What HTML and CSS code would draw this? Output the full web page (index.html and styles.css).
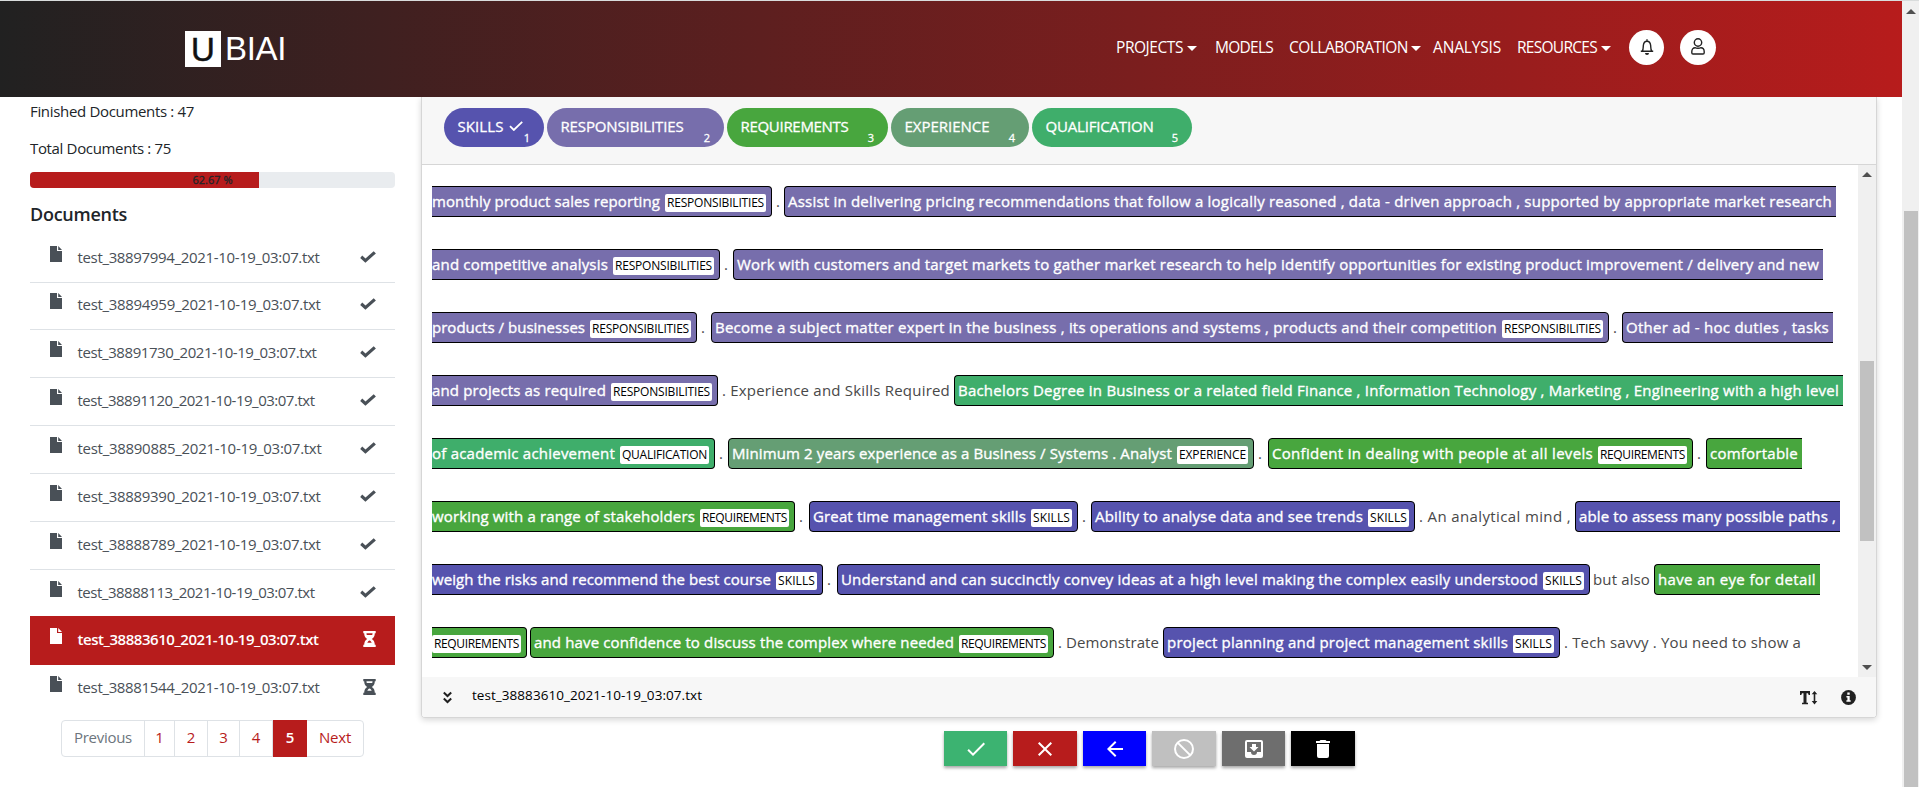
FILE: index.html
```html
<!DOCTYPE html>
<html lang="en">
<head>
<meta charset="utf-8">
<title>UBIAI</title>
<link rel="stylesheet" href="styles.css">
</head>
<body>
<svg class="defs" width="0" height="0">
  <symbol id="file" viewBox="0 0 12 16"><path d="M0 0h7v5h5v11H0zM8.2 0 12 3.9H8.2z"/></symbol>
  <symbol id="check" viewBox="0 0 16 12"><path d="M5.4 11.8.2 6.9l2-2.3 3.3 2.8L13.7.2 15.9 2.4z"/></symbol>
  <symbol id="glass" viewBox="0 0 13 16"><path fill-rule="evenodd" d="M.3 0h12.4v2.2h-.9c0 2.8-1.1 4.600-3 5.800 1.900 1.200 3 3 3 5.800h.9V16H.3v-2.200h.9c0-2.800 1.100-4.600 3-5.800-1.900-1.200-3-3-3-5.800H.3zM3.500 2.200c0 .7.100 1.200.3 1.800h5.400c.2-.6.3-1.100.3-1.800zM4.300 11.800h4.400C8.200 10.300 7.400 9.400 6.500 9.400S4.800 10.300 4.300 11.800z"/></symbol>
</svg>
<div class="window">
  <div class="page">
    <header class="topbar">
      <div class="logo"><span class="logo-u">U</span><span class="logo-rest fit" style="width:61px">BIAI</span></div>
      <nav class="nav">
        <a class="dd"><span class="fit" style="width:67px">PROJECTS</span><i class="caret"></i></a>
        <a class="models"><span class="fit" style="width:58px">MODELS</span></a>
        <a class="dd collab"><span class="fit" style="width:119px">COLLABORATION</span><i class="caret"></i></a>
        <a class="analysis"><span class="fit" style="width:68px">ANALYSIS</span></a>
        <a class="dd"><span class="fit" style="width:80px">RESOURCES</span><i class="caret"></i></a>
        <button class="round bell"><svg width="14" height="16" viewBox="0 0 14 16" fill="none" stroke="#222" stroke-width="1.4"><path d="M.8 12.300h12.400M2.300 12c1-1.500.9-3.200 1-5.200C3.500 4.200 4.800 2.300 7 2.300s3.500 1.900 3.700 4.500c.1 2 0 3.700 1 5.200M7 .2v2"/><path d="M5 14h4a2 2 0 0 1-4 0z" fill="#222" stroke="none"/></svg></button>
        <button class="round user"><svg width="14" height="17" viewBox="0 0 14 17" fill="none" stroke="#222" stroke-width="1.400"><circle cx="7" cy="4.500" r="3.700"/><path d="M4.200 9.700C2 9.700.8 11.500.8 13.700v1.100c0 .8.400 1.200 1.200 1.200h10c.8 0 1.200-.4 1.200-1.200v-1.100c0-2.200-1.200-4-3.400-4-1 .8-4.600.8-5.600 0z"/></svg></button>
      </nav>
    </header>
    <div class="content">
      <aside class="side">
        <p class="stat"><span class="fit" style="width:164px">Finished Documents : 47</span></p>
        <p class="stat"><span class="fit" style="width:141px">Total Documents : 75</span></p>
        <div class="progress"><div class="bar" style="width:62.67%"></div><span class="pct">62.67 %</span></div>
        <h2><span class="fit" style="width:97px">Documents</span></h2>
        <ul class="docs">
          <li><svg class="file"><use href="#file"/></svg><span class="name fit" style="width:242px">test_38897994_2021-10-19_03:07.txt</span><svg class="check"><use href="#check"/></svg></li>
          <li class="short"><svg class="file"><use href="#file"/></svg><span class="name fit" style="width:243px">test_38894959_2021-10-19_03:07.txt</span><svg class="check"><use href="#check"/></svg></li>
          <li><svg class="file"><use href="#file"/></svg><span class="name fit" style="width:239px">test_38891730_2021-10-19_03:07.txt</span><svg class="check"><use href="#check"/></svg></li>
          <li><svg class="file"><use href="#file"/></svg><span class="name fit" style="width:237px">test_38891120_2021-10-19_03:07.txt</span><svg class="check"><use href="#check"/></svg></li>
          <li><svg class="file"><use href="#file"/></svg><span class="name fit" style="width:244px">test_38890885_2021-10-19_03:07.txt</span><svg class="check"><use href="#check"/></svg></li>
          <li><svg class="file"><use href="#file"/></svg><span class="name fit" style="width:243px">test_38889390_2021-10-19_03:07.txt</span><svg class="check"><use href="#check"/></svg></li>
          <li><svg class="file"><use href="#file"/></svg><span class="name fit" style="width:243px">test_38888789_2021-10-19_03:07.txt</span><svg class="check"><use href="#check"/></svg></li>
          <li class="last-done"><svg class="file"><use href="#file"/></svg><span class="name fit" style="width:237px">test_38888113_2021-10-19_03:07.txt</span><svg class="check"><use href="#check"/></svg></li>
          <li class="active"><svg class="file"><use href="#file"/></svg><span class="name fit" style="width:241px">test_38883610_2021-10-19_03:07.txt</span><svg class="glass"><use href="#glass"/></svg></li>
          <li class="end"><svg class="file"><use href="#file"/></svg><span class="name fit" style="width:242px">test_38881544_2021-10-19_03:07.txt</span><svg class="glass"><use href="#glass"/></svg></li>
        </ul>
        <div class="pager"><a class="prev"><span class="fit" style="width:58px">Previous</span></a><a class="p1">1</a><a class="p2">2</a><a class="p3">3</a><a class="p4">4</a><a class="current">5</a><a class="next"><span class="fit" style="width:32px">Next</span></a></div>
      </aside>
      <main class="main">
        <section class="card">
          <div class="labels">
            <div class="pill skills w-skills"><span class="fit" style="width:46px">SKILLS</span><svg width="14" height="10" viewBox="0 0 14 10"><path d="M1 5.200 4.800 9 13.200.8" fill="none" stroke="#fff" stroke-width="1.800"/></svg><b>1</b></div>
            <div class="pill resp w-resp"><span class="fit" style="width:123px">RESPONSIBILITIES</span><b>2</b></div>
            <div class="pill req w-req"><span class="fit" style="width:108px">REQUIREMENTS</span><b>3</b></div>
            <div class="pill exp w-exp"><span class="fit" style="width:85px">EXPERIENCE</span><b>4</b></div>
            <div class="pill qual w-qual"><span class="fit" style="width:108px">QUALIFICATION</span><b>5</b></div>
          </div>
          <div class="body">
            <div class="text">
              <div class="line"><span class="hl resp cont"><span class="t fit" style="width:228px">monthly product sales reporting</span><em class="w101">RESPONSIBILITIES</em></span><span class="gap" style="width:12px">.</span><span class="hl resp open"><span class="t fit" style="width:1044px">Assist in delivering pricing recommendations that follow a logically reasoned , data - driven approach , supported by appropriate market research</span></span></div>
              <div class="line"><span class="hl resp cont"><span class="t fit" style="width:176px">and competitive analysis</span><em class="w101">RESPONSIBILITIES</em></span><span class="gap" style="width:13px">.</span><span class="hl resp open"><span class="t fit" style="width:1082px">Work with customers and target markets to gather market research to help identify opportunities for existing product improvement / delivery and new</span></span></div>
              <div class="line"><span class="hl resp cont"><span class="t fit" style="width:153px">products / businesses</span><em class="w101">RESPONSIBILITIES</em></span><span class="gap" style="width:14px">.</span><span class="hl resp"><span class="t fit" style="width:782px">Become a subject matter expert in the business , its operations and systems , products and their competition</span><em class="w101">RESPONSIBILITIES</em></span><span class="gap" style="width:13px">.</span><span class="hl resp open"><span class="t fit" style="width:203px">Other ad - hoc duties , tasks</span></span></div>
              <div class="line"><span class="hl resp cont"><span class="t fit" style="width:174px">and projects as required</span><em class="w101">RESPONSIBILITIES</em></span><span class="plain"><span class="fit" style="width:228px">. Experience and Skills Required</span></span><span class="hl qual open"><span class="t fit" style="width:881px">Bachelors Degree in Business or a related field Finance , Information Technology , Marketing , Engineering with a high level</span></span></div>
              <div class="line"><span class="hl qual cont"><span class="t fit" style="width:183px">of academic achievement</span><em class="w89">QUALIFICATION</em></span><span class="gap" style="width:13px">.</span><span class="hl exp"><span class="t fit" style="width:440px">Minimum 2 years experience as a Business / Systems . Analyst</span><em class="w71">EXPERIENCE</em></span><span class="gap" style="width:14px">.</span><span class="hl req"><span class="t fit" style="width:321px">Confident in dealing with people at all levels</span><em class="w89">REQUIREMENTS</em></span><span class="gap" style="width:13px">.</span><span class="hl req open"><span class="t fit" style="width:88px">comfortable</span></span></div>
              <div class="line"><span class="hl req cont"><span class="t fit" style="width:263px">working with a range of stakeholders</span><em class="w89">REQUIREMENTS</em></span><span class="gap" style="width:14px">.</span><span class="hl skills"><span class="t fit" style="width:213px">Great time management skills</span><em class="w41">SKILLS</em></span><span class="gap" style="width:13px">.</span><span class="hl skills"><span class="t fit" style="width:268px">Ability to analyse data and see trends</span><em class="w41">SKILLS</em></span><span class="plain"><span class="fit" style="width:152px">. An analytical mind ,</span></span><span class="hl skills open"><span class="t fit" style="width:257px">able to assess many possible paths ,</span></span></div>
              <div class="line"><span class="hl skills cont"><span class="t fit" style="width:339px">weigh the risks and recommend the best course</span><em class="w41">SKILLS</em></span><span class="gap" style="width:14px">.</span><span class="hl skills"><span class="t fit" style="width:697px">Understand and can succinctly convey ideas at a high level making the complex easily understood</span><em class="w41">SKILLS</em></span><span class="plain tight"><span class="fit" style="width:57px">but also</span></span><span class="hl req open"><span class="t fit" style="width:158px">have an eye for detail</span></span></div>
              <div class="line"><span class="hl req cont"><em class="w89">REQUIREMENTS</em></span><span class="gap bare" style="width:3px"></span><span class="hl req"><span class="t fit" style="width:420px">and have confidence to discuss the complex where needed</span><em class="w89">REQUIREMENTS</em></span><span class="plain"><span class="fit" style="width:101px">. Demonstrate</span></span><span class="hl skills"><span class="t fit" style="width:341px">project planning and project management skills</span><em class="w41">SKILLS</em></span><span class="plain"><span class="fit" style="width:237px">. Tech savvy . You need to show a</span></span></div>
            </div>
            <div class="scroll inner"><i class="up"></i><div class="thumb"></div><i class="down"></i></div>
          </div>
          <footer class="foot">
            <svg width="9" height="13" viewBox="0 0 9 13" fill="none" stroke="#212121" stroke-width="2"><path d="M.8 1.500 4.500 5 8.200 1.500M.8 7.500 4.500 11 8.200 7.500"/></svg>
            <span class="fname fit" style="width:230px">test_38883610_2021-10-19_03:07.txt</span>
            <svg class="size" width="18" height="14" viewBox="0 0 18 14" fill="#212121"><path d="M0 0h10v4H8.700L8 2.200H6.500v9.500H8V13.300H2V11.700h1.500V2.200H2L1.300 4H0zM14.500 0l2.800 3.300h-2v6.800h2l-2.800 3.300-2.800-3.300h2V3.300h-2z"/></svg>
            <svg class="info" width="15" height="15" viewBox="0 0 15 15"><circle cx="7.500" cy="7.500" r="7.400" fill="#212121"/><path d="M6.300 2.600h2.400v2.200H6.300zM5.400 5.900h3.300v4.300h1v1.500H5.400v-1.500h1V7.400h-1z" fill="#fff"/></svg>
          </footer>
        </section>
        <div class="actions">
          <button class="ok"><svg width="24" height="24" viewBox="0 0 24 24"><path d="M9 16.200 4.800 12l-1.400 1.400L9 19 21 7l-1.400-1.400z"/></svg></button>
          <button class="no"><svg width="24" height="24" viewBox="0 0 24 24"><path d="M19 6.400 17.600 5 12 10.600 6.400 5 5 6.400 10.600 12 5 17.600 6.400 19l5.600-5.600 5.600 5.600 1.400-1.400-5.600-5.600z"/></svg></button>
          <button class="back"><svg width="24" height="24" viewBox="0 0 24 24"><path d="M20 11H7.800l5.600-5.600L12 4l-8 8 8 8 1.400-1.400L7.800 13H20z"/></svg></button>
          <button class="block"><svg width="24" height="24" viewBox="0 0 24 24"><g fill="none" stroke="#fff" stroke-width="2"><circle cx="12" cy="12" r="9"/><path d="m5.600 5.600 12.800 12.800"/></g></svg></button>
          <button class="inbox"><svg width="24" height="24" viewBox="0 0 24 24"><path fill-rule="evenodd" d="M5 3h14a2 2 0 0 1 2 2v14a2 2 0 0 1-2 2H5a2 2 0 0 1-2-2V5a2 2 0 0 1 2-2zm0 2v10h4a3 3 0 0 0 6 0h4V5zm5 2h4v3h2.500L12 14.500 7.500 10H10z"/></svg></button>
          <button class="trash"><svg width="24" height="24" viewBox="0 0 24 24"><path d="M6 19a2 2 0 0 0 2 2h8a2 2 0 0 0 2-2V7H6zM19 4h-3.500l-1-1h-5l-1 1H5v2h14z"/></svg></button>
        </div>
      </main>
    </div>
  </div>
  <div class="scroll outer"><i class="up"></i><div class="thumb"></div></div>
</div>
<script src="fit.js"></script>
</body>
</html>
```

FILE: styles.css
```css
* { box-sizing: border-box; }
body { margin: 0; height: 787px; overflow: hidden; background: #fff; color: #212529; font: 15px/20px "Open Sans", "Noto Sans", sans-serif; }
button { border: 0; padding: 0; display: flex; align-items: center; justify-content: center; }
svg { display: block; flex: none; }
.defs { position: absolute; }
.fit { display: block; flex: none; white-space: nowrap; }
.window { display: flex; height: 787px; border-top: 1px solid #d9dcdc; }
.page { width: 1902px; display: flex; flex-direction: column; }

.topbar { height: 96px; flex: none; display: flex; justify-content: space-between; padding: 0 186px 0 185px; background: linear-gradient(90deg, #212121, #b71c1c); color: #fff; }
.logo { display: flex; align-items: center; gap: 4px; font: 33px/36px "Liberation Sans", sans-serif; height: 96px; }
.logo-u { width: 36px; height: 36px; background: #fff; color: #111; text-align: center; line-height: 38px; -webkit-text-stroke: .5px #111; }
.logo-rest { line-height: 38px; }
.nav { display: flex; align-items: center; height: 93px; font-size: 15.500px; }
.nav .fit { padding-bottom: 1px; }
.nav a { display: flex; align-items: center; }
.caret { margin: 1px 0 0 4px; border: 5px solid transparent; border-top-color: #fff; border-bottom: 0; }
.models { margin: 0 16px 0 18px; }
.analysis { margin: 0 16px 0 12px; }
.collab .caret { margin-left: 3px; }
.round { border-radius: 50%; background: #fff; width: 35px; height: 35px; margin-left: 18px; }
.round svg { margin-bottom: 2px; }
.user { width: 36px; margin-left: 16px; }

.content { display: flex; flex: 1; }
.side { width: 421px; padding: 0 26px 0 30px; }
.stat { margin: 0; height: 37px; padding-top: 4px; }
.stat + .stat { height: 38px; }
.progress { position: relative; width: 365px; height: 16px; border-radius: 4px; background: #e9ecef; overflow: hidden; }
.bar { height: 16px; background: #b71c1c; }
.pct { position: absolute; inset: 0; text-align: center; font-size: 11px; line-height: 16px; -webkit-text-stroke: .3px; }
h2 { margin: 0; padding-top: 14px; height: 47px; font-size: 18px; line-height: 24px; font-weight: 600; }
.docs { list-style: none; margin: 0; padding: 0; width: 365px; color: #495057; }
.docs li { display: flex; align-items: flex-start; height: 48px; padding: 11px 19px 0 20px; border-bottom: 1px solid #dee2e6; }
.docs .short { height: 47px; padding-top: 10px; }
.docs .last-done { height: 46px; border: 0; }
.docs .active { height: 49px; padding-top: 12px; border: 0; background: #b71c1c; color: #fff; font-weight: 600; }
.docs .end { border: 0; height: 55px; }
.docs svg { fill: currentColor; }
.file { width: 12px; height: 16px; }
.name { margin: 1px auto 0 15.500px; }
.check { width: 16px; height: 12px; margin-top: 5px; }
.glass { width: 13px; height: 16px; margin-top: 3px; }
.pager { display: flex; width: 303px; height: 37px; margin-left: 31px; border: 1px solid #dee2e6; border-radius: 4px; color: #b71c1c; line-height: 33px; }
.pager a { display: flex; justify-content: center; border-right: 1px solid #dee2e6; }
.pager .prev { width: 83px; color: #6c757d; }
.p1 { width: 30px; }
.p2 { width: 33px; }
.p3 { width: 32px; }
.p4 { width: 33px; }
.pager .current { width: 34px; margin: -1px 0; border: 0; line-height: 35px; background: #b71c1c; color: #fff; font-weight: 600; }
.pager .next { flex: 1; border: 0; }

.main { width: 1481px; }
.card { width: 1456px; height: 621px; display: flex; flex-direction: column; border: 1px solid #d6d6d6; border-top: 0; border-radius: 0 0 4px 4px; box-shadow: 0 2px 6px rgba(0,0,0,.16); overflow: hidden; clip-path: inset(0 -10px -12px -10px); }
.labels { height: 68px; flex: none; display: flex; padding: 11px 22px 0; background: #f7f7f7; border-bottom: 1px solid #d6d6d6; color: #fff; }
.pill { position: relative; height: 39px; padding: 8px 0 0 13.500px; border-radius: 20px; display: flex; font-size: 15px; -webkit-text-stroke: .3px; margin-right: 3px; }
.pill svg { margin: 5px 0 0 5px; }
.pill b { position: absolute; right: 14px; bottom: 2px; font-size: 11px; line-height: 14px; font-weight: 400; }
.w-skills { width: 100px; }
.w-resp { width: 177px; }
.w-req { width: 161px; }
.w-exp { width: 138px; }
.w-qual { width: 160px; }
.skills { background: #5653ae; }
.resp { background: #776eac; }
.req { background: #48a63e; }
.exp { background: #659e74; }
.qual { background: #3fae6b; }
.body { display: flex; height: 512px; flex: none; }
.text { flex: 1; padding: 21px 0 0 10px; overflow: hidden; font-size: 15px; line-height: 28px; color: #484848; }
.line { display: flex; height: 63px; }
.hl { display: flex; height: 31px; border: 1px solid #000; border-radius: 4px; padding: 0 5px 0 3px; color: #fff; flex: none; }
.t { -webkit-text-stroke: .35px; }
.cont { border-left: 0; border-top-left-radius: 0; border-bottom-left-radius: 0; padding-left: 0; }
.open { border-right: 0; border-top-right-radius: 0; border-bottom-right-radius: 0; padding-right: 4px; }
.hl em { margin: 7px 0 0 5px; height: 18px; border-radius: 2px; background: #fff; color: #000; font-style: normal; font-size: 12px; line-height: 18px; padding: 0 2px; overflow: hidden; white-space: nowrap; }
.cont em:first-child { margin-left: 0; }
.w101 { width: 101px; }
.w89 { width: 89px; }
.w71 { width: 71px; }
.w41 { width: 41px; }
.gap { flex: none; line-height: 30px; padding-left: 4px; }
.bare { padding: 0; }
.plain { line-height: 30px; padding: 0 4px 0 4px; flex: none; }
.tight { padding: 0 4px 0 3px; }
.foot { height: 40px; flex: none; display: flex; padding: 14px 20px 0 21px; background: #f7f7f7; }
.fname { margin: -6px auto 0 20px; font-size: 13.500px; color: #000; }
.size { margin-right: 23px; }
.info { margin-top: -1px; }

.scroll { background: #f0f0f0; display: flex; flex-direction: column; align-items: center; flex: none; }
.scroll .thumb { width: 14px; background: #c1c1c1; }
.inner { width: 18px; }
.outer { width: 17px; }
.up { border: 5px solid transparent; border-top: 0; border-bottom-color: #505050; }
.down { border: 5px solid transparent; border-bottom: 0; border-top-color: #505050; margin-top: 124px; }
.inner .up { margin: 7px 0 184px; }
.inner .thumb { height: 180px; }
.outer .up { margin: 8px 0 197px; }
.outer .thumb { flex: 1; }

.actions { display: flex; gap: 6px; padding: 13px 0 0 523px; }
.actions button { width: 64px; height: 35px; box-shadow: 0 2px 3px rgba(0,0,0,.35); }
.actions svg { fill: #fff; }
.actions .ok { width: 63px; background: #3cb371; }
.actions .no { background: #b71c1c; }
.actions .back { width: 63px; background: #00f; }
.actions .block { background: #c0c0c0; }
.actions .inbox { width: 63px; background: #6e6e6e; }
.actions .trash { background: #000; }
```

FILE: fit.js
```js
// Spread or tighten the tracking so each label fills its own width.
function fit(el) {
  const range = document.createRange();
  range.selectNodeContents(el);
  const cs = getComputedStyle(el);
  const room = el.clientWidth - parseFloat(cs.paddingLeft) - parseFloat(cs.paddingRight);
  const extra = room - range.getBoundingClientRect().width;
  el.style.letterSpacing = (extra / el.textContent.length).toFixed(4) + 'px';
}
document.querySelectorAll('.fit, .hl em').forEach(fit);
```
